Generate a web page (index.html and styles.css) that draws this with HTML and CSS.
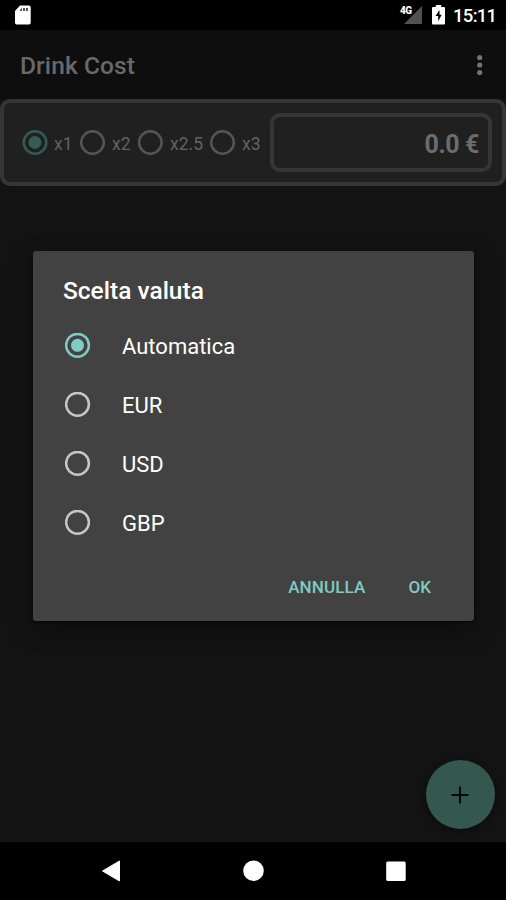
FILE: index.html
```html
<!DOCTYPE html>
<html lang="it">
<head>
<meta charset="utf-8">
<title>Drink Cost</title>
<link rel="stylesheet" href="styles.css">
</head>
<body>
<div class="screen">
  <header class="status">
    <svg class="sd" width="18" height="20" viewBox="0 0 18 20"><path d="M6 .5h9a1.700 1.700 0 0 1 1.700 1.700v15.600a1.700 1.700 0 0 1-1.700 1.700H2.700A1.700 1.700 0 0 1 1 17.800V6z" fill="#fff"/><path d="M6 4.700l2-1.700v3H6zM9 3h2v3H9zM12 3h2v3h-2z" fill="#555"/></svg>
    <div class="status-right">
      <div class="signal"><span class="network">4G</span><svg width="18" height="18" viewBox="0 0 18 18"><path d="M18 0v18H0z" fill="#515151"/></svg></div>
      <svg class="battery" width="13" height="20" viewBox="0 0 13 20"><path d="M3.800 0h5.400v2H12q1 0 1 1v15.500q0 1-1 1H1q-1 0-1-1V3q0-1 1-1h2.800z" fill="#fff"/><path d="M7.500 5L3.500 11h2.700v5.200L9.700 9.700H7.500z" fill="#000"/></svg>
      <span class="clock">15:11</span>
    </div>
  </header>
  <div class="appbar">
    <h1 class="app-title">Drink Cost</h1>
    <svg class="more" width="6" height="22" viewBox="0 0 6 22" fill="#737373"><circle cx="2.700" cy="3.500" r="2.600"/><circle cx="2.700" cy="11" r="2.600"/><circle cx="2.700" cy="18.500" r="2.600"/></svg>
  </div>
  <main class="content">
    <section class="card">
      <div class="multipliers">
        <label class="mult m1"><svg class="radio dim on" viewBox="0 0 26 26"><circle class="ring" cx="13" cy="12.500" r="11.300"/><circle class="dot" cx="13" cy="12.500" r="6.500"/></svg><span>x1</span></label>
        <label class="mult m2"><svg class="radio dim" viewBox="0 0 26 26"><circle class="ring" cx="12.500" cy="12.500" r="11.300"/></svg><span>x2</span></label>
        <label class="mult m3"><svg class="radio dim" viewBox="0 0 26 26"><circle class="ring" cx="12.300" cy="12.500" r="11.300"/></svg><span>x2.5</span></label>
        <label class="mult m4"><svg class="radio dim" viewBox="0 0 26 26"><circle class="ring" cx="12.500" cy="12.500" r="11.300"/></svg><span>x3</span></label>
      </div>
      <div class="amount"><span>0.0 €</span></div>
    </section>
    <button class="fab" aria-label="Aggiungi"><svg width="18" height="18" viewBox="0 0 18 18"><path d="M9 .5v17M.5 9h17" stroke="#050a09" stroke-width="2.100"/></svg></button>
  </main>
  <nav class="navbar">
    <svg width="20" height="22" viewBox="0 0 20 22"><path d="M1.500 11L18.500 1v20z" fill="#fff" stroke="#fff" stroke-linejoin="round"/></svg>
    <svg width="22" height="22" viewBox="0 0 22 22"><circle cx="10.500" cy="10.700" r="10.300" fill="#fff"/></svg>
    <svg width="20" height="20" viewBox="0 0 20 20"><rect x=".2" y=".5" width="19.500" height="19.500" rx="1.500" fill="#fff"/></svg>
  </nav>
  <div class="dialog" role="dialog">
    <h2 class="dialog-title">Scelta valuta</h2>
    <div class="options">
      <label class="option"><svg class="radio on" viewBox="0 0 26 26"><circle class="ring" cx="12.500" cy="12.300" r="11.400"/><circle class="dot" cx="12.500" cy="12.300" r="6.500"/></svg><span>Automatica</span></label>
      <label class="option"><svg class="radio" viewBox="0 0 26 26"><circle class="ring" cx="12.500" cy="12.300" r="11.400"/></svg><span>EUR</span></label>
      <label class="option"><svg class="radio" viewBox="0 0 26 26"><circle class="ring" cx="12.500" cy="12.300" r="11.400"/></svg><span>USD</span></label>
      <label class="option"><svg class="radio" viewBox="0 0 26 26"><circle class="ring" cx="12.500" cy="12.300" r="11.400"/></svg><span>GBP</span></label>
    </div>
    <div class="actions"><span class="cancel">ANNULLA</span><span>OK</span></div>
  </div>
</div>
</body>
</html>
```
FILE: styles.css
```css
* { box-sizing: border-box; }
body { margin: 0; font-family: Roboto, sans-serif; background: #000; }
h1, h2 { margin: 0; }
svg { display: block; flex: none; }
.screen { position: relative; width: 506px; height: 900px; overflow: hidden; display: flex; flex-direction: column; background: #131313; }
.status { height: 30px; flex: none; background: #000; display: flex; align-items: center; justify-content: space-between; padding: 0 10px 0 14px; }
.status-right { display: flex; align-items: center; }
.signal { position: relative; width: 22px; display: flex; justify-content: flex-end; margin-right: 10px; }
.network { position: absolute; left: 0; top: 0; font-size: 10px; line-height: 10px; font-weight: 900; letter-spacing: -.5px; color: #fff; }
.battery { margin-right: 8px; }
.clock { color: #fff; font-size: 18.500px; font-weight: 500; letter-spacing: -.7px; line-height: 30px; width: 43px; white-space: nowrap; padding-top: 2px; }
.appbar { height: 69px; flex: none; background: #0e0e0e; display: flex; align-items: center; justify-content: space-between; padding: 0 23px 0 20px; }
.app-title { font-size: 24.500px; font-weight: 500; letter-spacing: .1px; color: #696969; padding-top: 1px; }
.content { flex: 1; display: flex; flex-direction: column; justify-content: space-between; }
.card { height: 87px; border: 4px solid #363636; border-radius: 10px; background: #202020; display: flex; align-items: center; justify-content: space-between; padding: 0 10px 0 18px; }
.multipliers { display: flex; }
.mult { display: flex; align-items: center; gap: 6px; color: #636363; font-size: 17.500px; line-height: 26px; }
.mult span { padding-top: 2px; }
.m1, .m2 { width: 58px; }
.m3 { width: 72px; }
.m4 { width: 51px; }
.radio { width: 26px; height: 26px; fill: none; stroke: #c6c6c6; stroke-width: 2.500px; }
.radio.on { stroke: #80cbc4; }
.radio .dot { fill: #80cbc4; stroke: none; }
.radio.dim { stroke: #555; }
.radio.dim.on { stroke: #345b54; }
.radio.dim .dot { fill: #345b54; }
.amount { width: 222px; height: 59px; border: 4px solid #363636; border-radius: 10px; display: flex; align-items: center; justify-content: flex-end; padding: 3px 9px 0 0; color: #6c6c6c; font-size: 25px; font-weight: 700; letter-spacing: -.4px; }
.fab { align-self: flex-end; width: 69px; height: 69px; margin: 0 11.500px 13px 0; padding: 0; border: 0; border-radius: 50%; background: #345750; display: flex; align-items: center; justify-content: center; box-shadow: 0 3px 7px rgba(0,0,0,.4); }
.navbar { height: 58px; flex: none; background: #000; display: flex; align-items: center; justify-content: space-between; padding: 0 100px 0 101px; }
.dialog { position: absolute; left: 33px; top: 251px; width: 441px; height: 370px; background: #424242; border-radius: 3px; box-shadow: 0 8px 24px rgba(0,0,0,.35), 0 1px 3px rgba(0,0,0,.5); padding: 24px 30px 0; color: #fff; }
.dialog-title { font-size: 24.500px; font-weight: 500; line-height: 32px; height: 41px; }
.option { height: 59px; display: flex; align-items: center; font-size: 22px; gap: 31px; padding-left: 2px; }
.option span { padding-top: 2px; }
.actions { display: flex; justify-content: flex-end; gap: 43px; padding: 23px 13px 0 0; color: #80cbc4; font-size: 17px; font-weight: 500; line-height: 24px; }
.cancel { letter-spacing: .15px; }
```
